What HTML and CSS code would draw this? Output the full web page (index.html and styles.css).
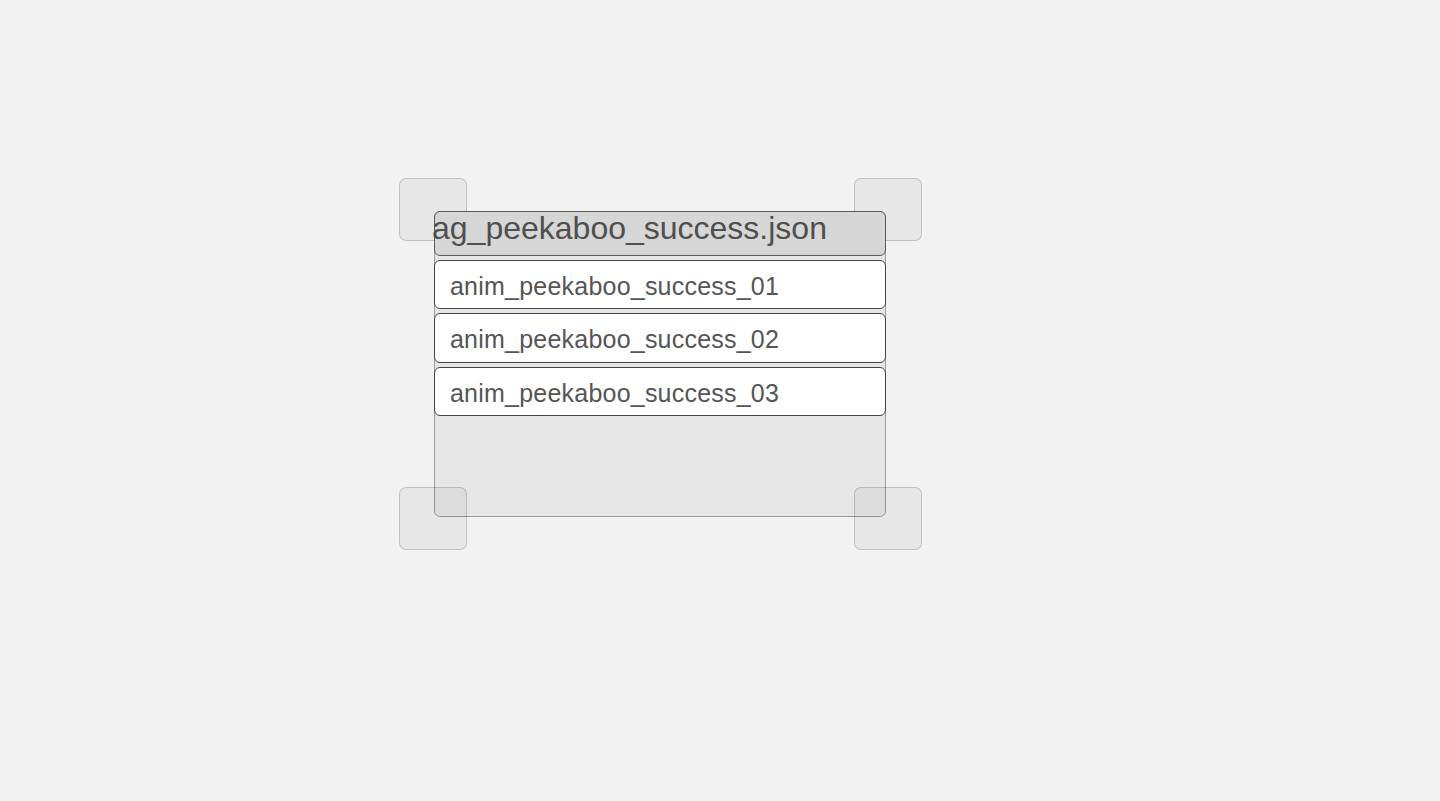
FILE: index.html
```html
<!DOCTYPE html>
<html>
<head>
<meta charset="utf-8">
<link rel="stylesheet" href="styles.css">
</head>
<body>
<div class="stage">
  <div class="panel">
    <div class="handle handle-tl"></div>
    <div class="handle handle-tr"></div>
    <div class="handle handle-bl"></div>
    <div class="handle handle-br"></div>
    <div class="header">ag_peekaboo_success.json</div>
    <div class="list">
      <div class="row">anim_peekaboo_success_01</div>
      <div class="row">anim_peekaboo_success_02</div>
      <div class="row">anim_peekaboo_success_03</div>
    </div>
  </div>
</div>
</body>
</html>
```

FILE: styles.css
```css
html, body {
  margin: 0;
  padding: 0;
  background: #f2f2f2;
  width: 1440px;
  height: 801px;
  overflow: hidden;
  font-family: "Liberation Sans", Arial, Helvetica, sans-serif;
  color: #555555;
}

.stage {
  padding: 211px 0 0 434px;
}

.panel {
  position: relative;
  width: 450px;
  height: 304px;
  background: #e6e6e6;
  border: 1px solid #9c9c9c;
  border-radius: 6px;
  display: flex;
  flex-direction: column;
  gap: 4px;
}

.handle {
  position: absolute;
  width: 66px;
  height: 61px;
  background: rgba(0, 0, 0, 0.045);
  border: 1px solid rgba(0, 0, 0, 0.16);
  border-radius: 7px;
  z-index: 0;
}
.handle-tl { left: -36px; top: -34px; }
.handle-tr { left: 419px; top: -34px; }
.handle-bl { left: -36px; top: 275px; }
.handle-br { left: 419px; top: 275px; }

.header {
  position: relative;
  z-index: 1;
  margin: -1px -1px 0 -1px;
  height: 43px;
  background: #d6d6d6;
  border: 1px solid #5a5a5a;
  border-radius: 6px;
  font-size: 32px;
  line-height: 32px;
  text-indent: -3px;
  white-space: nowrap;
  color: #4f4f4f;
}

.list {
  position: relative;
  z-index: 1;
  display: flex;
  flex-direction: column;
  gap: 4px;
  margin: 0 -1px;
}

.row {
  height: 47.4px;
  background: #ffffff;
  border: 1px solid #454545;
  border-radius: 6px;
  padding-left: 15px;
  font-size: 25px;
  line-height: 50px;
  letter-spacing: 0.22px;
  white-space: nowrap;
  color: #555555;
}
```
